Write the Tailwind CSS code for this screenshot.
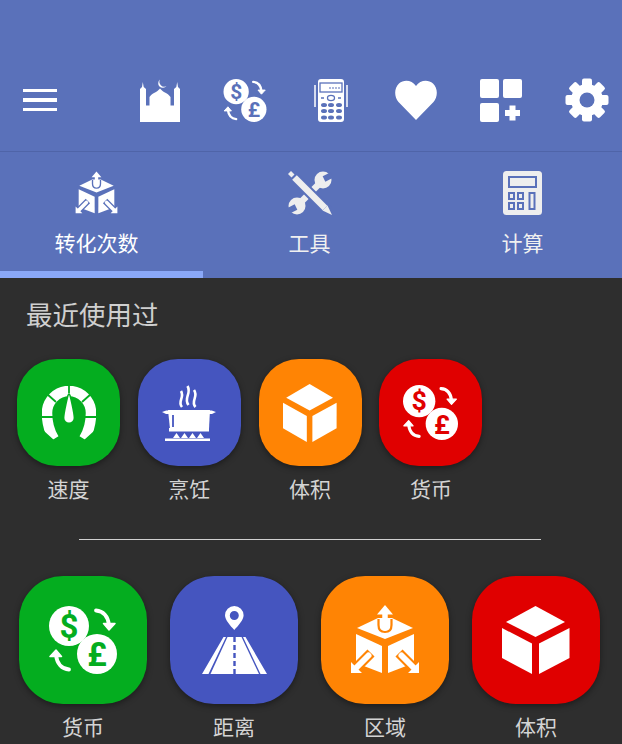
<!DOCTYPE html>
<html lang="zh">
<head>
<meta charset="utf-8">
<script src="https://cdn.jsdelivr.net/npm/@tailwindcss/browser@4"></script>
</head>
<body class="w-[622px] h-[744px] overflow-hidden bg-[#2e2e2e] font-['Liberation_Sans','Noto_Sans_CJK_SC',sans-serif]">
<svg class="hidden" width="0" height="0">
  <symbol id="cur" viewBox="0 0 68 68">
    <circle cx="20" cy="20" r="20" fill="#fff"/>
    <circle cx="48" cy="48" r="20" fill="#fff"/>
    <text x="20" y="31.500" text-anchor="middle" font-size="33" font-weight="700" font-family="Roboto" fill="currentColor">$</text>
    <text x="48" y="60" text-anchor="middle" font-size="33" font-weight="700" font-family="Roboto" fill="currentColor">£</text>
    <path d="M47 4.500C54 5 59 10 60 19" fill="none" stroke="#fff" stroke-width="3.800" stroke-linecap="round"/>
    <path d="M54.500 17.500L60 24L66 17.500Z" fill="#fff" stroke="#fff" stroke-width="1.500" stroke-linejoin="round"/>
    <path d="M20 63.500C13 63 8 58 7 49" fill="none" stroke="#fff" stroke-width="3.800" stroke-linecap="round"/>
    <path d="M12.500 50.500L7 44L1 50.500Z" fill="#fff" stroke="#fff" stroke-width="1.500" stroke-linejoin="round"/>
  </symbol>
  <symbol id="cube" viewBox="0 0 68 68" preserveAspectRatio="none">
    <path fill="#fff" d="M33.500 0L63 16L33.500 31L4 16Z"/>
    <path fill="#fff" d="M0 22L30 37.600V68L0 52Z"/>
    <path fill="#fff" d="M37 37.600L67.500 22V52L37 68Z"/>
  </symbol>
  <symbol id="area" viewBox="0 0 70 70">
    <path fill="#fff" d="M7 23L28 13H42L63 23L35 34Z"/>
    <path fill="#fff" d="M6 29L32 41V68L6 58Z"/>
    <path fill="#fff" d="M64 29L38 41V68L64 58Z"/>
    <path d="M28.500 14V20Q28.500 27 35 27Q41.500 27 41.500 20V14" stroke="currentColor" stroke-width="2.200" fill="none"/>
    <path d="M35 23V7" stroke="#fff" stroke-width="5.500" fill="none" stroke-linecap="round"/>
    <path fill="#fff" d="M35 0L43 9.500H27Z"/>
    <path d="M21 48L1 68M49 48L69 68" stroke="currentColor" stroke-width="10" fill="none"/>
    <path d="M18.500 50.500L6 63M51.500 50.500L64 63" stroke="#fff" stroke-width="6" fill="none" stroke-linecap="round"/>
    <path fill="#fff" d="M1 57L12 68H1ZM69 57L58 68H69Z"/>
  </symbol>
  <symbol id="road" viewBox="0 0 65 68">
    <path fill="#fff" fill-rule="evenodd" d="M32.300 0A9.300 9.300 0 0 1 41.600 9.300C41.600 14 36 20 32.300 24C28.600 20 23 14 23 9.300A9.300 9.300 0 0 1 32.300 0ZM32.300 5A4.500 4.500 0 1 0 32.300 14A4.500 4.500 0 1 0 32.300 5Z"/>
    <path fill="#fff" d="M25.500 31H39.500L57 68H8.500Z"/>
    <path fill="#fff" d="M21.500 31H24L6.500 68H0ZM41 31H43.500L65 68H58.500Z"/>
    <path d="M32.500 31V68" stroke="currentColor" stroke-width="2.400" stroke-dasharray="5 3"/>
  </symbol>
  <symbol id="gauge" viewBox="0 0 54 54">
    <path d="M12 53C7 45 5 38 5 27A22 22 0 0 1 49 27C49 38 47 45 42 53" fill="none" stroke="#fff" stroke-width="10.500"/>
    <path d="M0 31H12M42 31H54M5 8L14 16M49 8L40 16M27 0V7" stroke="currentColor" stroke-width="1.800"/>
    <path d="M2 45L12 54L0 54ZM52 45L42 54L54 54Z" fill="currentColor"/>
    <path fill="#fff" stroke="currentColor" stroke-width="1.800" d="M27 8C28.500 8 32.500 28 32.500 32A5.500 5.500 0 0 1 21.500 32C21.500 28 25.500 8 27 8Z"/>
  </symbol>
  <symbol id="pot" viewBox="0 0 54 56">
    <path d="M20 22C15 16 23 13 19 6M26.500 20C21 13 30 9 25.500 1M33.500 22C28 16 37 12 32 5" fill="none" stroke="#fff" stroke-width="2.600"/>
    <path fill="#fff" d="M6 25H48L47 44H8Z"/>
    <path fill="#fff" d="M0 27C3 26 5 25 8 26V29H4ZM54 27C51 26 49 25 46 26V29H50Z"/>
    <path d="M11 30V42" stroke="currentColor" stroke-width="1.800"/>
    <path fill="#fff" d="M7 43H47V46.500H7Z"/>
    <path fill="#fff" d="M11 53L14.500 48L18 53ZM19 53L22.500 48L26 53ZM27 53L30.500 48L34 53ZM35 53L38.500 48L42 53Z"/>
    <path fill="#fff" d="M3 53.500H48V56H3Z"/>
  </symbol>
  <symbol id="mosque" viewBox="0 0 42 43">
    <path fill="#fff" d="M1 10L3 8L3.800 3L4.700 8L7 10V26.500H10.500V18C13 14 18 13.500 21 9.500C24 13.500 29 14 31.500 18V26.500H35V10L37.300 8L38.200 3L39 8L41 10V43H1Z"/>
    <path fill="#fff" d="M21 0.500A4.800 4.800 0 0 0 20.500 7.500A4.800 4.800 0 0 0 27.500 7A4.800 4.800 0 0 1 21 0.500Z"/>
  </symbol>
  <symbol id="phone" viewBox="0 0 34 43">
    <rect x="4" y="0" width="26" height="43" rx="3" fill="#fff"/>
    <path d="M1 6V28M33 6V28" stroke="#fff" stroke-width="1.500"/>
    <rect x="6" y="4" width="22" height="9" fill="none" stroke="currentColor" stroke-width="1.300"/>
    <path d="M15 9H26" stroke="currentColor" stroke-width="1.200" stroke-dasharray="2 1"/>
    <ellipse cx="17" cy="19" rx="3.500" ry="2.600" fill="none" stroke="currentColor" stroke-width="1.300"/>
    <path d="M7 19H10M24 19H27" stroke="currentColor" stroke-width="1.500"/>
    <g fill="currentColor">
      <ellipse cx="10" cy="26" rx="3" ry="2.100"/><ellipse cx="17" cy="26" rx="3" ry="2.100"/><ellipse cx="25" cy="26" rx="3" ry="2.100"/>
      <ellipse cx="10" cy="32" rx="3" ry="2.100"/><ellipse cx="17" cy="32" rx="3" ry="2.100"/><ellipse cx="25" cy="32" rx="3" ry="2.100"/>
      <ellipse cx="10" cy="38.500" rx="3" ry="2.100"/><ellipse cx="17" cy="38.500" rx="3" ry="2.100"/><ellipse cx="25" cy="38.500" rx="3" ry="2.100"/>
    </g>
  </symbol>
  <symbol id="gear" viewBox="-22 -22 44 44">
    <circle r="16" fill="#fff"/>
    <g fill="#fff">
      <rect x="-5" y="-21.500" width="10" height="10" rx="2"/>
      <rect x="-5" y="-21.500" width="10" height="10" rx="2" transform="rotate(45)"/>
      <rect x="-5" y="-21.500" width="10" height="10" rx="2" transform="rotate(90)"/>
      <rect x="-5" y="-21.500" width="10" height="10" rx="2" transform="rotate(135)"/>
      <rect x="-5" y="-21.500" width="10" height="10" rx="2" transform="rotate(180)"/>
      <rect x="-5" y="-21.500" width="10" height="10" rx="2" transform="rotate(225)"/>
      <rect x="-5" y="-21.500" width="10" height="10" rx="2" transform="rotate(270)"/>
      <rect x="-5" y="-21.500" width="10" height="10" rx="2" transform="rotate(315)"/>
    </g>
    <circle r="7.500" fill="currentColor"/>
  </symbol>
  <symbol id="tools" viewBox="0 0 44 44">
    <path d="M9 35L35 9" stroke="#eee" stroke-width="6.500"/>
    <circle cx="9" cy="35" r="8.500" fill="#eee"/>
    <circle cx="35" cy="9" r="8.500" fill="#eee"/>
    <path d="M8 36L0 40M36 8L44 4" stroke="currentColor" stroke-width="6"/>
    <path d="M3 3L40 40" stroke="currentColor" stroke-width="10.500"/>
    <path d="M6.500 6.500L37 37" stroke="#eee" stroke-width="6.500"/>
    <path d="M0 3L3 0L6.500 3.500L3.500 6.500Z" fill="#eee"/>
    <path d="M34.500 39.500L39.500 34.500L44 44Z" fill="#eee"/>
  </symbol>
  <symbol id="calc" viewBox="0 0 39 44">
    <rect width="39" height="44" rx="3.500" fill="#eee"/>
    <g fill="none" stroke="currentColor" stroke-width="2">
      <rect x="6" y="6" width="27" height="10"/>
      <rect x="6" y="22" width="5" height="6"/><rect x="15" y="22" width="5" height="6"/>
      <rect x="6" y="32" width="5" height="6"/><rect x="15" y="32" width="5" height="6"/>
      <rect x="26.500" y="22" width="5" height="16"/>
    </g>
  </symbol>
</svg>

<header class="h-[152px] pt-[49px] bg-[#5a71ba] border-b border-[#4f64a8]">
  <div class="h-[102px] flex items-center">
    <div class="w-[34px] ml-[23px] mr-[60.33px] shrink-0 flex flex-col gap-[6px]">
      <span class="block h-[3.500px] bg-white"></span>
      <span class="block h-[3.500px] bg-white"></span>
      <span class="block h-[3.500px] bg-white"></span>
    </div>
    <div class="w-[85.33px] shrink-0 flex justify-center"><svg class="w-[42px] h-[43px] text-[#5a71ba]"><use href="#mosque"/></svg></div>
    <div class="w-[85.33px] shrink-0 flex justify-center"><svg class="w-[44px] h-[43px] text-[#5a71ba]"><use href="#cur"/></svg></div>
    <div class="w-[85.33px] shrink-0 flex justify-center"><svg class="w-[34px] h-[43px] text-[#5a71ba]"><use href="#phone"/></svg></div>
    <div class="w-[85.33px] shrink-0 flex justify-center"><svg class="w-[42px] h-[40px]" viewBox="0 0 42 40"><path fill="#fff" d="M21 40L3.500 22C-1 17-1 8 4 3.500C9-1 17 0 21 6C25 0 33-1 38 3.500C43 8 43 17 38.500 22Z"/></svg></div>
    <div class="w-[85.33px] shrink-0 flex justify-center"><svg class="w-[42px] h-[43px]" viewBox="0 0 42 43"><g fill="#fff"><rect width="19" height="19" rx="2"/><rect x="23" width="19" height="19" rx="2"/><rect y="24" width="19" height="19" rx="2"/><path d="M29.500 26.500H35.500V31H40V37H35.500V41.500H29.500V37H25V31H29.500Z"/></g></svg></div>
    <div class="w-[85.33px] shrink-0 flex justify-center"><svg class="w-[44px] h-[44px] text-[#5a71ba]"><use href="#gear"/></svg></div>
  </div>
</header>

<nav class="relative h-[126px] bg-[#5a71ba] overflow-hidden">
  <div class="flex -ml-[10px] pt-[19px]">
    <div class="w-[213px] shrink-0 flex flex-col items-center">
      <svg class="w-[43px] h-[44px] text-[#5a71ba]"><use href="#area"/></svg>
      <span class="mt-[13px] text-[21px] leading-[32px] text-white">转化次数</span>
    </div>
    <div class="w-[213px] shrink-0 flex flex-col items-center">
      <svg class="w-[44px] h-[44px] text-[#5a71ba]"><use href="#tools"/></svg>
      <span class="mt-[13px] text-[21px] leading-[32px] text-[#f0f0f0]">工具</span>
    </div>
    <div class="w-[213px] shrink-0 flex flex-col items-center">
      <svg class="w-[39px] h-[44px] text-[#5a71ba]"><use href="#calc"/></svg>
      <span class="mt-[13px] text-[21px] leading-[32px] text-[#f0f0f0]">计算</span>
    </div>
  </div>
  <div class="absolute left-0 bottom-0 w-[203px] h-[7px] bg-[#8aa8f8]"></div>
</nav>

<main>
  <h2 class="h-[81px] pl-[26px] text-[26.500px] leading-[76px] font-normal text-[#cfcfcf]">最近使用过</h2>
  <div class="flex gap-[17.800px] pl-[17px]">
    <div class="w-[103px] shrink-0">
      <div class="h-[107px] rounded-[40px] bg-[#04ad1f] shadow-[0_2px_6px_rgba(0,0,0,0.4)] flex items-center justify-center"><svg class="w-[54px] h-[54px] text-[#04ad1f]"><use href="#gauge"/></svg></div>
      <p class="h-[48px] text-center text-[21px] leading-[48px] text-[#d4d4d4]">速度</p>
    </div>
    <div class="w-[103px] shrink-0">
      <div class="h-[107px] rounded-[40px] bg-[#4555bf] shadow-[0_2px_6px_rgba(0,0,0,0.4)] flex items-center justify-center"><svg class="w-[54px] h-[56px] text-[#4555bf]"><use href="#pot"/></svg></div>
      <p class="h-[48px] text-center text-[21px] leading-[48px] text-[#d4d4d4]">烹饪</p>
    </div>
    <div class="w-[103px] shrink-0">
      <div class="h-[107px] rounded-[40px] bg-[#ff8404] shadow-[0_2px_6px_rgba(0,0,0,0.4)] flex items-center justify-center"><svg class="w-[54px] h-[58px]"><use href="#cube"/></svg></div>
      <p class="h-[48px] text-center text-[21px] leading-[48px] text-[#d4d4d4]">体积</p>
    </div>
    <div class="w-[103px] shrink-0">
      <div class="h-[107px] rounded-[40px] bg-[#e00000] shadow-[0_2px_6px_rgba(0,0,0,0.4)] flex items-center justify-center"><svg class="w-[55px] h-[57px] text-[#e00000]"><use href="#cur"/></svg></div>
      <p class="h-[48px] text-center text-[21px] leading-[48px] text-[#d4d4d4]">货币</p>
    </div>
  </div>
  <div class="mt-[25px] ml-[79px] w-[462px] h-[1px] bg-[#d0d0d0]"></div>
  <div class="mt-[36px] flex gap-[23px] pl-[19px]">
    <div class="w-[128px] shrink-0">
      <div class="h-[128px] rounded-[44px] bg-[#04ad1f] shadow-[0_2px_6px_rgba(0,0,0,0.4)] flex items-center justify-center"><svg class="w-[68px] h-[68px] text-[#04ad1f]"><use href="#cur"/></svg></div>
      <p class="h-[48px] text-center text-[21px] leading-[48px] text-[#d4d4d4]">货币</p>
    </div>
    <div class="w-[128px] shrink-0">
      <div class="h-[128px] rounded-[44px] bg-[#4555bf] shadow-[0_2px_6px_rgba(0,0,0,0.4)] flex items-center justify-center"><svg class="w-[65px] h-[68px] text-[#4555bf]"><use href="#road"/></svg></div>
      <p class="h-[48px] text-center text-[21px] leading-[48px] text-[#d4d4d4]">距离</p>
    </div>
    <div class="w-[128px] shrink-0">
      <div class="h-[128px] rounded-[44px] bg-[#ff8404] shadow-[0_2px_6px_rgba(0,0,0,0.4)] flex items-center justify-center"><svg class="w-[70px] h-[70px] text-[#ff8404]"><use href="#area"/></svg></div>
      <p class="h-[48px] text-center text-[21px] leading-[48px] text-[#d4d4d4]">区域</p>
    </div>
    <div class="w-[128px] shrink-0">
      <div class="h-[128px] rounded-[44px] bg-[#e00000] shadow-[0_2px_6px_rgba(0,0,0,0.4)] flex items-center justify-center"><svg class="w-[68px] h-[68px]"><use href="#cube"/></svg></div>
      <p class="h-[48px] text-center text-[21px] leading-[48px] text-[#d4d4d4]">体积</p>
    </div>
  </div>
</main>
</body>
</html>
